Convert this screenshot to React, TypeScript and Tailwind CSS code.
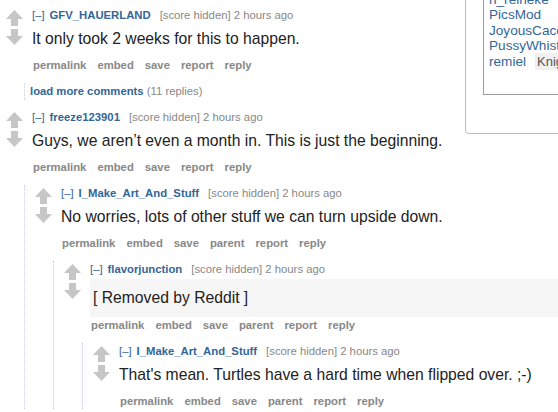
import React from "react";

type Node = {
  author?: string;
  body?: string;
  removed?: boolean;
  parent?: boolean;
  more?: { label: string; count: string };
  children?: Node[];
};

const thread: Node[] = [
  {
    author: "GFV_HAUERLAND",
    body: "It only took 2 weeks for this to happen.",
    children: [{ more: { label: "load more comments", count: "(11 replies)" } }],
  },
  {
    author: "freeze123901",
    body: "Guys, we aren’t even a month in. This is just the beginning.",
    children: [
      {
        author: "I_Make_Art_And_Stuff",
        body: "No worries, lots of other stuff we can turn upside down.",
        parent: true,
        children: [
          {
            author: "flavorjunction",
            removed: true,
            parent: true,
            children: [
              {
                author: "I_Make_Art_And_Stuff",
                body: "That's mean. Turtles have a hard time when flipped over. ;-)",
                parent: true,
              },
            ],
          },
        ],
      },
    ],
  },
];

const mods = ["n_reineke", "PicsMod", "JoyousCaco", "PussyWhistle"];

function Arrow({ down }: { down?: boolean }) {
  return (
    <svg width="17" height="16" viewBox="0 0 17 16" className={down ? "rotate-180" : ""}>
      <polygon points="8.5,0 17,9 12,9 12,16 5,16 5,9 0,9" fill="#c6c6c6" />
    </svg>
  );
}

function Comment({ node }: { node: Node }) {
  if (node.more) {
    return (
      <div className="mt-[1px] h-[17px] text-[11.3px] leading-[17px]">
        <span className="font-bold text-[#369]">{node.more.label}</span>{" "}
        <span className="text-[#888]">{node.more.count}</span>
      </div>
    );
  }
  const buttons = ["permalink", "embed", "save", ...(node.parent ? ["parent"] : []), "report", "reply"];
  return (
    <div>
      <div className="flex">
        <div className="ml-[5px] mt-[3px] flex w-[17px] shrink-0 flex-col gap-[3px]">
          <Arrow />
          <Arrow down />
        </div>
        <div className="ml-[9px] min-w-0 flex-1">
          <div className="h-[16px] whitespace-nowrap text-[11.3px] leading-[16px]">
            <span className="text-[#369]">[–]</span>
            <span className="ml-[5px] font-bold text-[#369]">{node.author}</span>
            <span className="ml-[9px] text-[#888]">[score hidden] 2 hours ago</span>
          </div>
          {node.removed ? (
            <div className="mt-[2px] bg-[#f6f6f6] px-[3px] py-[7px] text-[15.7px] leading-[24px] text-[#222]">
              [ Removed by Reddit ]
            </div>
          ) : (
            <div className="mt-[4px] mb-[6px] text-[15.7px] leading-[24px] text-[#222]">{node.body}</div>
          )}
          <ul className="flex gap-[11px] pl-[1px] text-[11.3px] font-bold leading-[16px] text-[#888]">
            {buttons.map((b) => (
              <li key={b}>{b}</li>
            ))}
          </ul>
        </div>
      </div>
      {node.children && (
        <div className="ml-[23px] mt-[10px] space-y-[9px] border-l border-dotted border-[#ccd] pl-[5px]">
          {node.children.map((c, i) => (
            <Comment key={i} node={c} />
          ))}
        </div>
      )}
    </div>
  );
}

export default function App() {
  return (
    <div className="h-[412px] w-[558px] overflow-hidden bg-white font-['Liberation_Sans',Arial,sans-serif]">
      <aside className="float-right -mr-[40px] -mt-[25px] w-[133px] rounded-[4px] border border-[#bdbdbd] pb-[38px] pl-[17px] pt-[10px]">
        <div className="border border-[#9d9d9d] pb-[24px] pl-[5px] pt-[5px] text-[13.6px] leading-[15.3px] text-[#369] whitespace-nowrap">
          {mods.map((m) => (
            <div key={m}>{m}</div>
          ))}
          <div>
            remiel
            <span className="ml-[9px] inline-block bg-[#f0f0f0] px-[2px] text-[13px] leading-[17px] text-[#555]">
              Knight of New
            </span>
          </div>
        </div>
      </aside>
      <div className="space-y-[9px] pl-[1px] pt-[7px]">
        {thread.map((c, i) => (
          <Comment key={i} node={c} />
        ))}
      </div>
    </div>
  );
}
